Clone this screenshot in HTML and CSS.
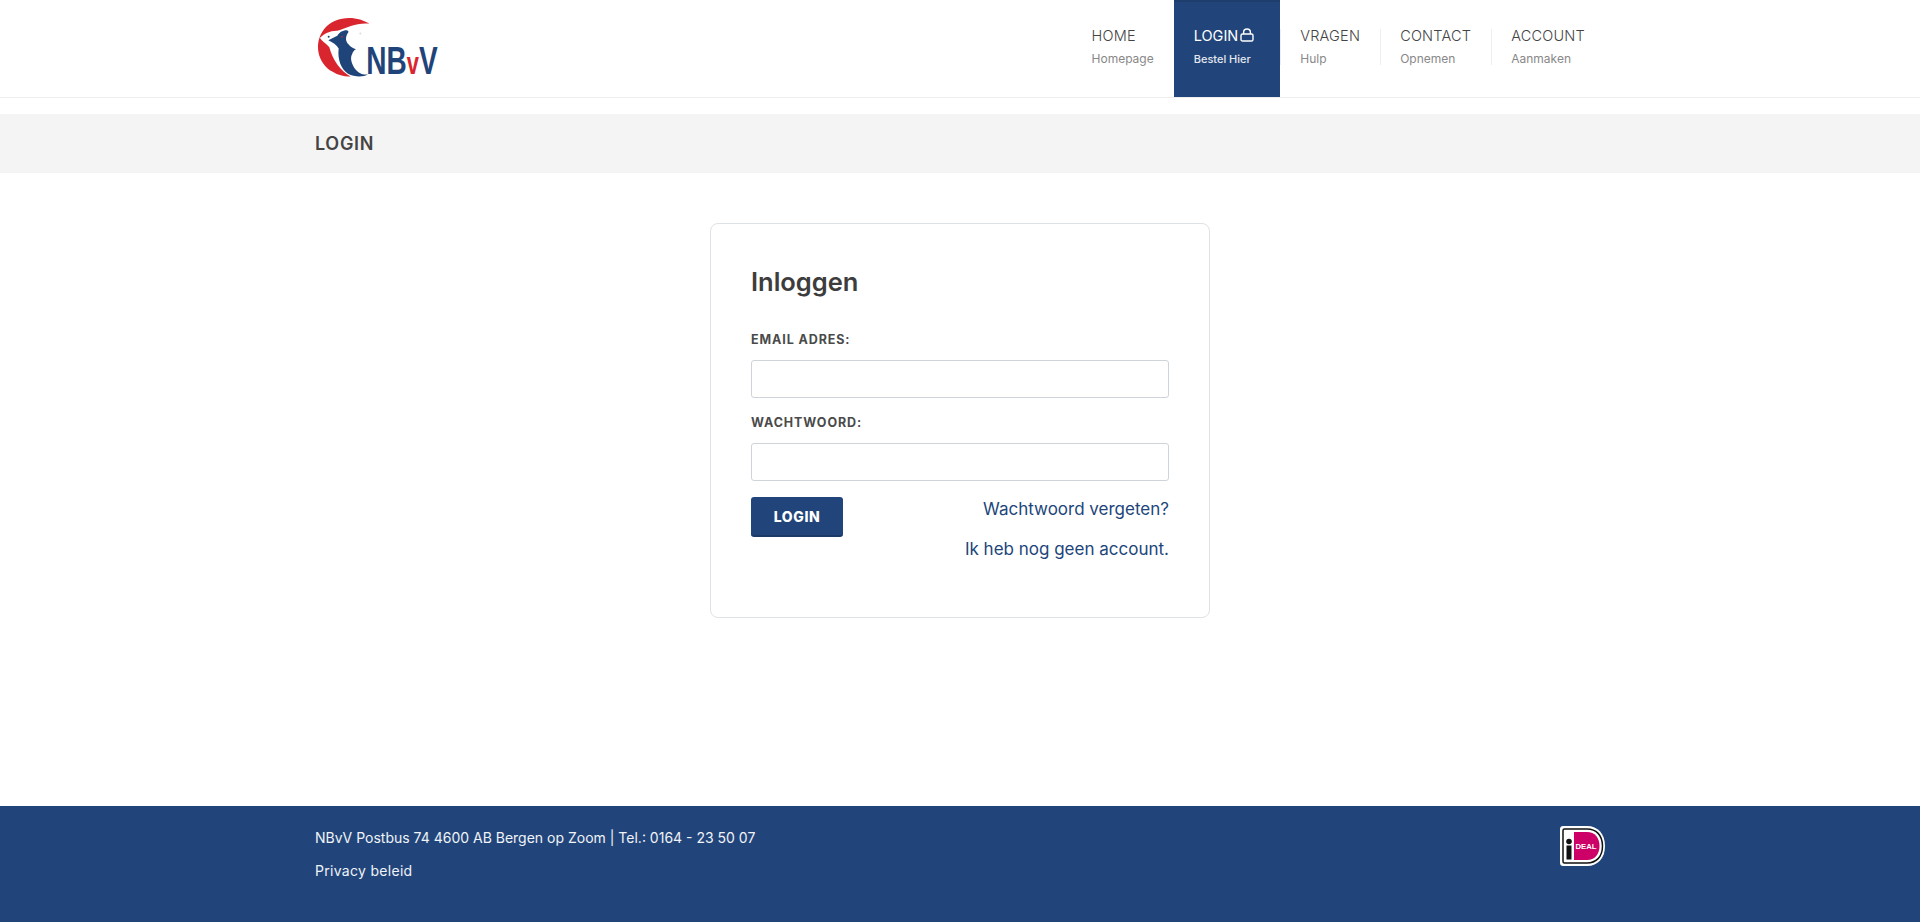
FILE: index.html
```html
<!DOCTYPE html>
<html lang="nl">
<head>
<meta charset="utf-8">
<title>Login</title>
<link rel="stylesheet" href="styles.css">
</head>
<body>
<header class="site-header">
  <div class="container header-row">
    <a class="logo" href="#" aria-label="NBvV">
      <svg class="logo-svg" viewBox="45 40 390 200" xmlns="http://www.w3.org/2000/svg">
        <path fill="#d9262e" d="M208 72C172 46 104 46 72 88C40 130 52 190 98 216C116 227 134 231 152 230C122 214 98 180 88 142C78 130 64 124 60 114C72 102 92 92 112 93C142 84 172 68 208 72Z"/>
        <path fill="#1f4479" d="M85 121L112 108C116 98 128 91 140 91C146 92 147 96 143 100C136 112 136 124 146 134C152 142 160 145 168 148C160 152 158 158 156 164C150 174 154 192 166 208C174 218 186 226 204 224C190 232 164 232 144 222C124 208 112 180 116 146C110 134 98 128 85 121Z"/>
        <circle cx="86" cy="111" r="3" fill="#1f4479"/>
        <circle cx="126" cy="111" r="2.500" fill="#d9262e"/>
        <circle cx="181" cy="101" r="3" fill="#d5dbe6"/>
        <text class="logo-text" x="199" y="224" textLength="214" lengthAdjust="spacingAndGlyphs">NB<tspan class="logo-v">v</tspan>V</text>
      </svg>
    </a>
    <nav class="nav">
      <a class="nav-item" href="#"><span class="nav-main">HOME</span><span class="nav-sub">Homepage</span></a>
      <a class="nav-item active" href="#">
        <span class="nav-main">LOGIN<svg class="lock" viewBox="0 0 14 14" xmlns="http://www.w3.org/2000/svg"><rect x="1" y="6" width="12" height="7" rx="1.600" fill="none" stroke="currentColor" stroke-width="1.400"/><path d="M3.600 6V4.200a3.400 3.200 0 0 1 6.800 0V6" fill="none" stroke="currentColor" stroke-width="1.400"/></svg></span>
        <span class="nav-sub">Bestel Hier</span>
      </a>
      <a class="nav-item sep" href="#"><span class="nav-main">VRAGEN</span><span class="nav-sub">Hulp</span></a>
      <a class="nav-item sep" href="#"><span class="nav-main">CONTACT</span><span class="nav-sub">Opnemen</span></a>
      <a class="nav-item sep" href="#"><span class="nav-main">ACCOUNT</span><span class="nav-sub">Aanmaken</span></a>
    </nav>
  </div>
</header>

<div class="title-bar">
  <div class="container"><h1 class="page-title">LOGIN</h1></div>
</div>

<main class="main">
  <form class="card">
    <h2 class="card-title">Inloggen</h2>
    <label class="label" for="email">EMAIL ADRES:</label>
    <input class="input" id="email" type="email">
    <label class="label label-2" for="pw">WACHTWOORD:</label>
    <input class="input" id="pw" type="password">
    <div class="actions">
      <button class="btn" type="button">LOGIN</button>
      <div class="links">
        <a href="#">Wachtwoord vergeten?</a>
        <a href="#">Ik heb nog geen account.</a>
      </div>
    </div>
  </form>
</main>

<footer class="footer">
  <div class="container footer-row">
    <div class="footer-text">
      <p>NBvV Postbus 74 4600 AB Bergen op Zoom | Tel.: 0164 - 23 50 07</p>
      <p><a class="privacy" href="#">Privacy beleid</a></p>
    </div>
    <svg class="ideal" viewBox="0 0 45 40" xmlns="http://www.w3.org/2000/svg">
      <path fill="#fff" d="M3 0H27C38 0 45 8 45 20C45 32 38 40 27 40H3C1.300 40 0 38.700 0 37V3C0 1.300 1.300 0 3 0Z"/>
      <path fill="none" stroke="#111" stroke-width="1.500" d="M4.500 3H27C36 3 42.500 9 42.500 20C42.500 31 36 37 27 37H4.500C3.600 37 3 36.400 3 35.500V4.500C3 3.600 3.600 3 4.500 3Z"/>
      <path fill="#cc0066" d="M14 6H27C35 6 39.500 12 39.500 20C39.500 28 35 34 27 34H14Z"/>
      <circle cx="9" cy="15.500" r="2.800" fill="#111"/>
      <rect x="6.500" y="19.500" width="5" height="14" fill="#111"/>
      <text class="ideal-text" x="15.500" y="23" textLength="21" lengthAdjust="spacingAndGlyphs">DEAL</text>
    </svg>
  </div>
</footer>
</body>
</html>
```
FILE: styles.css
```css
* { box-sizing: border-box; }
html, body { margin: 0; padding: 0; }
body {
  min-height: 100vh;
  display: flex;
  flex-direction: column;
  font-family: Inter, "Open Sans", "Liberation Sans", sans-serif;
  color: #444;
  background: #fff;
}
a { color: inherit; text-decoration: none; }
.container { width: 1320px; margin: 0 auto; padding: 0 15px; }

.site-header { height: 98px; border-bottom: 1px solid #eeeeee; }
.header-row { display: flex; justify-content: space-between; height: 97px; }
.logo { display: block; padding-top: 13px; }
.logo-svg { display: block; width: 130px; height: 67px; overflow: visible; }
.logo-text { font-family: "Liberation Sans Narrow", "Liberation Sans", sans-serif; font-weight: 700; font-size: 118px; fill: #1f4479; }
.logo-v { fill: #d9262e; font-size: 92px; }

.nav { display: flex; }
.nav-item { position: relative; display: flex; flex-direction: column; padding: 25px 20px 0; height: 97px; }
.nav-item.sep::before { content: ""; position: absolute; left: 0; top: 29px; height: 36px; width: 1px; background: #eeeeee; }
.nav-main { display: flex; align-items: center; height: 20px; font-size: 14.5px; font-weight: 300; letter-spacing: 0.2px; color: #444; white-space: nowrap; }
.nav-sub { margin-top: 5px; height: 18px; line-height: 18px; font-size: 12px; color: #888; white-space: nowrap; }
.active { background: #21457a; border-top: 2px solid #1d3d6c; padding: 23px 26px 0 20px; }
.active .nav-main { color: #fff; font-weight: 400; letter-spacing: 0; }
.active .nav-sub { color: #e3e7ee; font-size: 11px; font-weight: 500; }
.lock { width: 14px; height: 14px; margin-left: 2px; }

.title-bar { margin-top: 16px; height: 59px; background: #f4f4f4; display: flex; align-items: center; }
.page-title { margin: 0; font-size: 18px; font-weight: 600; letter-spacing: 0.7px; color: #444; }

.main { flex: 1; display: flex; justify-content: center; align-items: flex-start; padding-top: 50px; }
.card { width: 500px; height: 395px; padding: 40px; border: 1px solid #dee2e6; border-radius: 8px; }
.card-title { margin: 0; font-size: 25.5px; line-height: 36px; font-weight: 600; color: #3d3d3d; }
.label { display: block; margin-top: 30px; height: 20px; line-height: 20px; font-size: 12.5px; font-weight: 700; letter-spacing: 0.9px; color: #4a4a4a; }
.label-2 { margin-top: 15px; }
.input { display: block; width: 100%; height: 38px; margin-top: 10px; border: 1px solid #ced4da; border-radius: 3px; background: #fff; box-shadow: none; outline: 0; appearance: none; }
.actions { display: flex; justify-content: space-between; margin-top: 16px; }
.btn { width: 92px; height: 40px; padding: 0; border: 0; border-bottom: 2px solid #1b3a68; border-radius: 3px; background: #21457a; color: #fff; font-family: inherit; font-size: 14px; font-weight: 800; letter-spacing: 0.6px; }
.links { display: flex; flex-direction: column; align-items: flex-end; gap: 16px; font-size: 17px; line-height: 24px; color: #21457a; }

.footer { height: 116px; background: #21457a; color: #f0f3f7; }
.footer-row { display: flex; justify-content: space-between; }
.footer-text { padding-top: 21px; font-size: 14px; line-height: 21px; }
.footer-text p { margin: 0 0 12px; }
.privacy { letter-spacing: 0.3px; }
.ideal { width: 45px; height: 40px; margin-top: 20px; }
.ideal-text { font-family: "Liberation Sans", sans-serif; font-size: 8px; font-weight: 700; fill: #fff; }
```
